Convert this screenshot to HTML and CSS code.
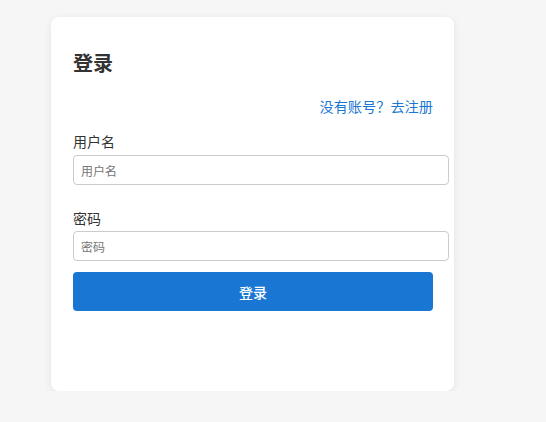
FILE: index.html
```html
<!DOCTYPE html>
<html lang="zh">
<head>
<meta charset="utf-8">
<link rel="stylesheet" href="styles.css">
</head>
<body>
<div class="card">
  <h2 class="title">登录</h2>
  <div class="switch"><a href="#" class="link">没有账号？去注册</a></div>
  <div class="field">
    <label class="label">用户名</label>
    <input class="input" type="text" placeholder="用户名">
  </div>
  <div class="field pw">
    <label class="label">密码</label>
    <input class="input" type="password" placeholder="密码">
  </div>
  <button class="btn">登录</button>
</div>
</body>
</html>
```
FILE: styles.css
```css
html, body {
  margin: 0;
  background: #f6f6f6;
  font-family: "Noto Sans CJK SC", "Noto Sans", sans-serif;
}
body {
  padding: 17px 0 0 51px;
}
.card {
  box-sizing: border-box;
  width: 403px;
  height: 374px;
  background: #fff;
  border-radius: 8px;
  box-shadow: 0 2px 8px rgba(0,0,0,0.08);
  padding: 0 21px 0 22px;
  display: flex;
  flex-direction: column;
}
.title {
  margin: 32px 0 0;
  font-size: 20px;
  line-height: 28px;
  font-weight: 700;
  color: #333;
}
.switch {
  margin-top: 19px;
  display: flex;
  justify-content: flex-end;
  font-size: 14.2px;
  line-height: 20px;
}
.link {
  color: #1976d2;
  text-decoration: none;
}
.field {
  display: flex;
  flex-direction: column;
  margin-top: 15px;
}
.field.pw {
  margin-top: 23px;
}
.label {
  font-size: 14px;
  line-height: 20px;
  color: #333;
  margin-bottom: 4px;
}
.pw .label {
  margin-bottom: 3px;
}
.input {
  width: 100%;
  box-sizing: content-box;
  height: 28px;
  padding: 0 7px;
  border: 1px solid #ccc;
  border-radius: 4px;
  font-family: inherit;
  font-size: 12px;
  color: #333;
  outline: none;
}
.input::placeholder {
  color: #757575;
}
.btn {
  margin-top: 11px;
  height: 39px;
  width: 100%;
  border: none;
  border-radius: 4px;
  background: #1976d2;
  color: #fff;
  font-family: inherit;
  font-size: 14px;
  font-weight: 500;
}
```
